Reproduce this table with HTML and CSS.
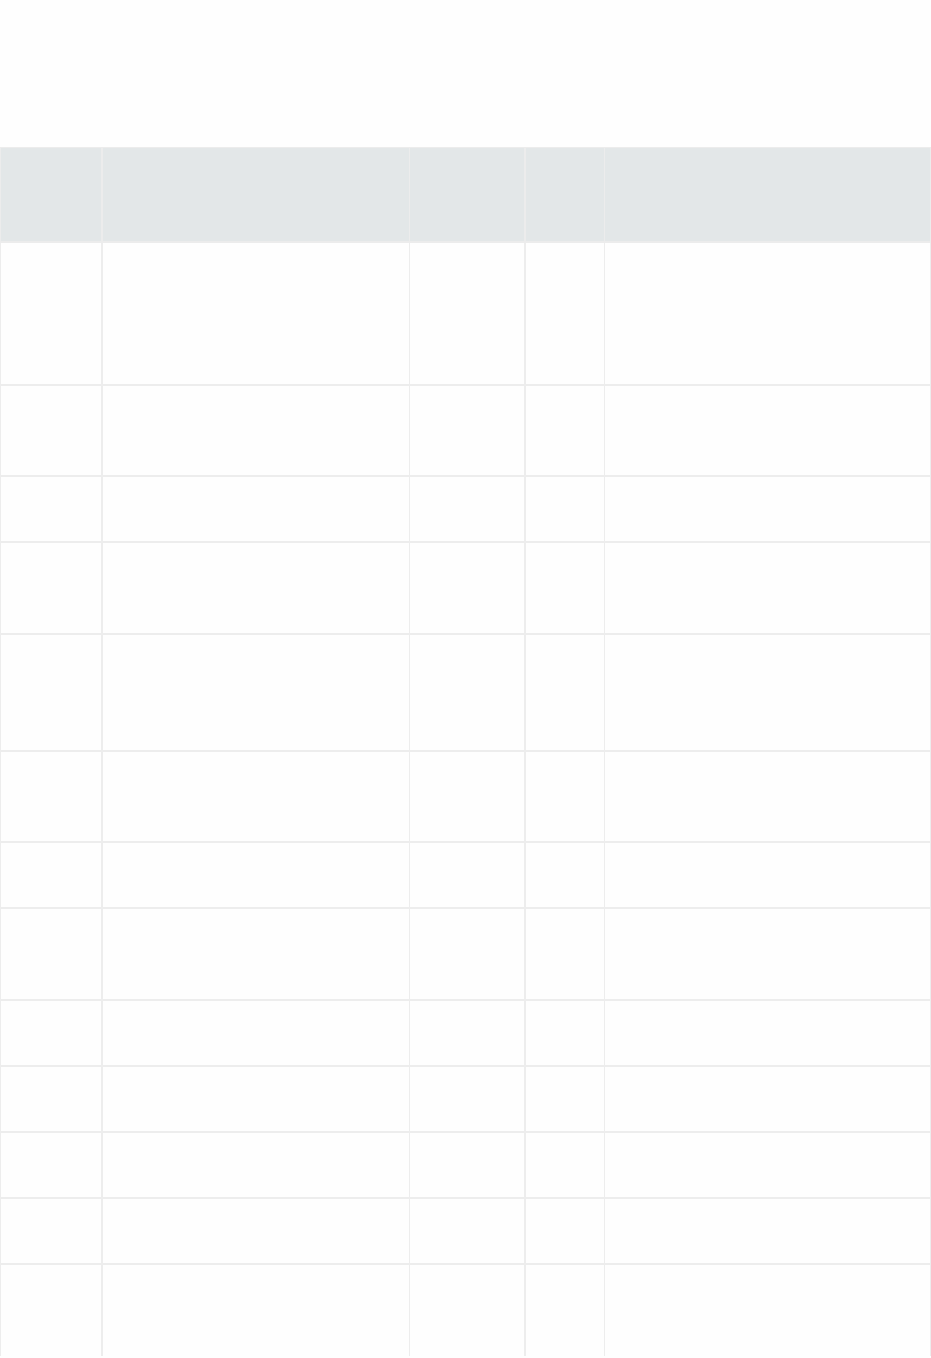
FILE: index.html
```html
<!DOCTYPE html>
<html lang="en">
  <head>
    <meta charset="UTF-8" />
    <meta name="viewport" content="width=device-width, initial-scale=1.0" />
    <title>Table</title>
    <link rel="stylesheet" href="styles.css">
  </head>
  <body>
  <div class="page">
    <table class="grid">
      <colgroup>
        <col class="c1">
        <col class="c2">
        <col class="c3">
        <col class="c4">
        <col class="c5">
      </colgroup>
      <thead>
        <tr class="head">
          <th></th><th></th><th></th><th></th><th></th>
        </tr>
      </thead>
      <tbody>
        <tr class="r143"><td></td><td></td><td></td><td></td><td></td></tr>
        <tr class="r91"><td></td><td></td><td></td><td></td><td></td></tr>
        <tr class="r66"><td></td><td></td><td></td><td></td><td></td></tr>
        <tr class="r92"><td></td><td></td><td></td><td></td><td></td></tr>
        <tr class="r117"><td></td><td></td><td></td><td></td><td></td></tr>
        <tr class="r91"><td></td><td></td><td></td><td></td><td></td></tr>
        <tr class="r66"><td></td><td></td><td></td><td></td><td></td></tr>
        <tr class="r92"><td></td><td></td><td></td><td></td><td></td></tr>
        <tr class="r66"><td></td><td></td><td></td><td></td><td></td></tr>
        <tr class="r66"><td></td><td></td><td></td><td></td><td></td></tr>
        <tr class="r66"><td></td><td></td><td></td><td></td><td></td></tr>
        <tr class="r66"><td></td><td></td><td></td><td></td><td></td></tr>
        <tr class="last"><td></td><td></td><td></td><td></td><td></td></tr>
      </tbody>
    </table>
  </div>
  </body>
</html>
```

FILE: styles.css
```css
html, body {
  margin: 0;
  background: #fefefe;
  font-family: "Open Sans", "Liberation Sans", sans-serif;
}
.page {
  padding-top: 147px;
  height: 1358px;
  box-sizing: border-box;
  overflow: hidden;
}
.grid {
  width: 930px;
  table-layout: fixed;
  border-collapse: collapse;
}
.c1 { width: 101px; }
.c2 { width: 308px; }
.c3 { width: 115px; }
.c4 { width: 80px; }
.c5 { width: 326px; }
.grid th,
.grid td {
  border: 1px solid #ededed;
  border-top-width: 2px;
  border-bottom-width: 2px;
  padding: 0;
}
/* thicker lines between first/second and third/fourth columns */
.grid th:nth-child(2),
.grid td:nth-child(2),
.grid th:nth-child(4),
.grid td:nth-child(4) {
  border-left-width: 2px;
}
.grid th {
  background-color: #e3e7e8;
  border-color: #ececec;
}
.grid thead th {
  border-top-width: 1px;
}
.head { height: 94px; }
.r143 { height: 143px; }
.r117 { height: 117px; }
.r92 { height: 92px; }
.r91 { height: 91px; }
.r66 { height: 66px; }
.last { height: 93px; }
.last td {
  border-bottom-color: #fefefe;
}
```
